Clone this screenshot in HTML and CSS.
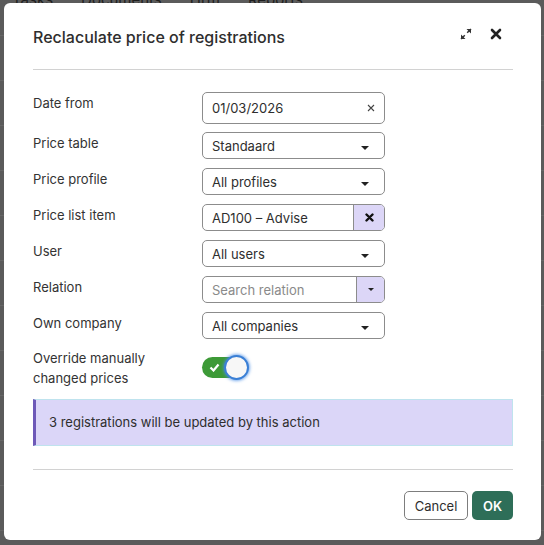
FILE: index.html
```html
<!DOCTYPE html>
<html>
<head>
  <title>Reclaculate price of registrations</title>
  <link rel="stylesheet" href="styles.css">
</head>
<body>
  <div class="page">
    <div class="nav">
      <span>Tasks</span>
      <span>Documents</span>
      <span>Hrm</span>
      <span>Reports</span>
    </div>
  </div>

  <div class="modal">
    <div class="modal-header">
      <h2>Reclaculate price of registrations</h2>
      <div class="header-tools">
        <svg class="tool" width="12" height="12" viewBox="0 0 12 12">
          <path d="M11 1L7.2 4.8M1 11l3.8-3.8" fill="none" stroke="#333" stroke-width="1.5"/>
          <path d="M6.5 1H11V5.5z M5.5 11H1V6.5z" fill="#333"/>
        </svg>
        <svg class="tool" width="12" height="12" viewBox="0 0 12 12">
          <path d="M2 2l8 8M10 2l-8 8" stroke="#222" stroke-width="2.6" stroke-linecap="round"/>
        </svg>
      </div>
    </div>

    <div class="modal-body">
      <div class="row">
        <label>Date from</label>
        <div class="field field-date">
          <span class="value">01/03/2026</span>
          <svg class="clear" width="8" height="8" viewBox="0 0 8 8">
            <path d="M1 1l6 6M7 1L1 7" stroke="#444" stroke-width="1.1"/>
          </svg>
        </div>
      </div>
      <div class="row">
        <label>Price table</label>
        <div class="field">
          <span class="value">Standaard</span>
          <span class="caret"></span>
        </div>
      </div>
      <div class="row">
        <label>Price profile</label>
        <div class="field">
          <span class="value">All profiles</span>
          <span class="caret"></span>
        </div>
      </div>
      <div class="row">
        <label>Price list item</label>
        <div class="field field-addon">
          <span class="value">AD100 – Advise</span>
          <span class="addon addon-wide">
            <svg width="9" height="9" viewBox="0 0 9 9">
              <path d="M1.5 1.5l6 6M7.5 1.5l-6 6" stroke="#111" stroke-width="2.4" stroke-linecap="round"/>
            </svg>
          </span>
        </div>
      </div>
      <div class="row">
        <label>User</label>
        <div class="field">
          <span class="value">All users</span>
          <span class="caret"></span>
        </div>
      </div>
      <div class="row">
        <label>Relation</label>
        <div class="field field-addon">
          <span class="value placeholder">Search relation</span>
          <span class="addon"><span class="caret small"></span></span>
        </div>
      </div>
      <div class="row">
        <label>Own company</label>
        <div class="field">
          <span class="value">All companies</span>
          <span class="caret"></span>
        </div>
      </div>
      <div class="row row-toggle">
        <label>Override manually<br>changed prices</label>
        <div class="toggle">
          <svg class="check" width="11" height="9" viewBox="0 0 11 9">
            <path d="M1.5 4.5l3 3 5-6" fill="none" stroke="#fff" stroke-width="2.2"/>
          </svg>
          <span class="knob"></span>
        </div>
      </div>

      <div class="alert">3 registrations will be updated by this action</div>
    </div>

    <div class="modal-footer">
      <button class="btn btn-cancel">Cancel</button>
      <button class="btn btn-ok">OK</button>
    </div>
  </div>
</body>
</html>
```

FILE: styles.css
```css
body {
  margin: 0;
  padding: 0;
  width: 544px;
  height: 545px;
  overflow: hidden;
  background-color: #5b5b5b;
  font-family: Inter, "Noto Sans", sans-serif;
  color: #333;
}

.page {
  height: 545px;
  background: repeating-linear-gradient(to bottom, #5b5b5b 0, #5b5b5b 44px, #666 44px, #666 45px);
}

.nav {
  display: flex;
  gap: 28px;
  padding-left: 12px;
  margin-top: -9px;
  font-size: 15px;
  line-height: 18px;
  color: #1e1e1e;
}

.modal {
  position: absolute;
  left: 4px;
  top: 3px;
  width: 537px;
  height: 537px;
  box-sizing: border-box;
  padding: 0 28px 0 29px;
  background: #fff;
  border-radius: 6px;
}

.modal-header {
  display: flex;
  align-items: center;
  height: 66px;
  border-bottom: 1px solid #d2d2d2;
}

.modal-header h2 {
  flex: 1;
  margin: 0;
  font-size: 16px;
  font-weight: 500;
  color: #2e2e2e;
  line-height: 24px;
  margin-top: 1px;
}

.header-tools {
  display: flex;
  gap: 18px;
  margin-right: 11px;
  margin-bottom: 4px;
}

.tool {
  display: block;
}

.modal-body {
  padding-top: 22px;
  padding-bottom: 23px;
  border-bottom: 1px solid #d2d2d2;
}

.row {
  display: flex;
  margin-bottom: 9px;
}

.row label {
  width: 169px;
  font-size: 13px;
  line-height: 20px;
  padding-top: 1px;
}

.field {
  width: 183px;
  height: 27px;
  box-sizing: border-box;
  border: 1px solid #8c8c8c;
  border-radius: 5px;
  display: flex;
  align-items: center;
  padding-left: 9px;
  font-size: 13px;
  overflow: hidden;
}

.field-date {
  height: 32px;
}

.row:first-child {
  margin-bottom: 8px;
}

.value {
  flex: 1;
  color: #2e2e2e;
}

.placeholder {
  color: #8a8a8a;
}

.clear {
  margin-right: 9px;
}

.caret {
  width: 0;
  height: 0;
  border-left: 4px solid transparent;
  border-right: 4px solid transparent;
  border-top: 4px solid #222;
  margin-right: 15px;
  margin-top: 5px;
}

.caret.small {
  border-left-width: 3px;
  border-right-width: 3px;
  border-top-width: 3px;
  margin: 0;
}

.field-addon {
  padding-right: 0;
}

.addon {
  align-self: stretch;
  width: 27px;
  display: flex;
  align-items: center;
  justify-content: center;
  background: #dcd6f7;
  border-left: 1px solid #8c8c8c;
}

.addon-wide {
  width: 30px;
}

.row-toggle {
  align-items: center;
  margin-bottom: 11px;
}

.row-toggle label {
  padding-top: 0;
}

.toggle {
  position: relative;
  width: 38px;
  height: 21px;
  border-radius: 11px;
  background: #3d9a37;
  margin-top: -1px;
}

.check {
  position: absolute;
  left: 7px;
  top: 6px;
}

.knob {
  position: absolute;
  left: 22px;
  top: -2px;
  width: 21px;
  height: 21px;
  border-radius: 50%;
  background: #f7f7f7;
  border: 2px solid #3a7fd5;
  box-shadow: 0 0 3px 1px rgba(70, 140, 230, 0.7);
}

.alert {
  background: #dbd6f8;
  border: 1px solid #bfe3ee;
  border-left: 3px solid #6e59b8;
  padding: 14px 13px;
  font-size: 13px;
  line-height: 17px;
  color: #2e2e2e;
}

.modal-footer {
  display: flex;
  justify-content: flex-end;
  gap: 4px;
  padding-top: 21px;
}

.btn {
  height: 29px;
  border-radius: 5px;
  font-family: Inter, "Noto Sans", sans-serif;
  font-size: 13px;
  cursor: pointer;
}

.btn-cancel {
  width: 64px;
  background: #fff;
  border: 1px solid #7d7d7d;
  color: #2e2e2e;
}

.btn-ok {
  width: 41px;
  background: #2e6e58;
  border: none;
  color: #fff;
  font-weight: 600;
}
```
